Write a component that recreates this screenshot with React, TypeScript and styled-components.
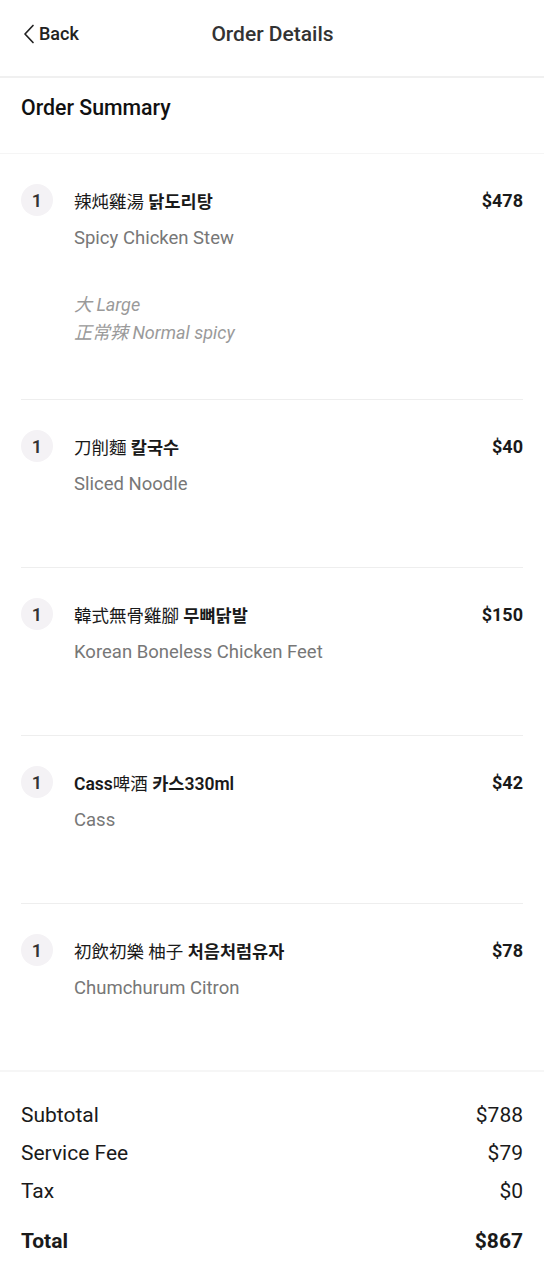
import React from "react";
import styled, { createGlobalStyle } from "styled-components";

const GlobalStyle = createGlobalStyle`
  body {
    margin: 0;
    background: #ffffff;
    font-family: Roboto, "Noto Sans CJK KR", "Noto Sans CJK SC", sans-serif;
    color: #1a1a1a;
  }
`

const Page = styled.div`
  width: 544px;
  min-height: 1280px;
  background: #fff;
`

const Header = styled.header`
  height: 78px;
  display: grid;
  grid-template-columns: 1fr auto 1fr;
  align-items: center;
  padding: 0 21px 9px 22px;
  box-sizing: border-box;
  border-bottom: 2px solid #f0f0f0;
`

const BackButton = styled.button`
  justify-self: start;
  display: flex;
  align-items: center;
  gap: 3px;
  border: none;
  background: transparent;
  padding: 0;
  font-family: Roboto, sans-serif;
  font-size: 18px;
  font-weight: 500;
  color: #222;
  cursor: pointer;
`

const Title = styled.h1`
  margin: 0;
  font-size: 21px;
  font-weight: 500;
  color: #333;
`

const SummaryHead = styled.h2`
  margin: 0;
  padding: 16px 21px 0;
  height: 76px;
  box-sizing: border-box;
  font-size: 21.3px;
  font-weight: 500;
  line-height: 28px;
  color: #111;
  border-bottom: 1px solid #f5f5f5;
`

const ItemList = styled.ul`
  list-style: none;
  margin: 0;
  padding: 0 21px;
`

const Item = styled.li`
  padding: 30px 0 52px;
  border-bottom: 1px solid #eeeeee;

  &:last-child {
    border-bottom: none;
    padding-bottom: 51px;
  }
`

const ItemRow = styled.div`
  display: flex;
  align-items: center;
  height: 32px;
`

const Qty = styled.span`
  width: 32px;
  height: 32px;
  border-radius: 50%;
  background: #f4f2f5;
  display: flex;
  align-items: center;
  justify-content: center;
  font-size: 18px;
  font-weight: 600;
  color: #333;
  margin-right: 21px;
  flex-shrink: 0;
`

const ItemName = styled.span`
  flex: 1;
  font-size: 17.5px;
  font-weight: 600;
  color: #1a1a1a;
`

const Han = styled.span`
  font-weight: 400;
`

const Price = styled.span`
  font-size: 18px;
  font-weight: 700;
  color: #1a1a1a;
`

const Detail = styled.div`
  margin: 10px 0 19px 53px;
  font-size: 18.5px;
  line-height: 24px;
  color: #777;
`

const Notes = styled.div`
  margin: 41px 0 0 53px;
  font-size: 18px;
  line-height: 28px;
  font-style: italic;
  color: #9a9a9a;
`

const Totals = styled.section`
  border-top: 2px solid #f6f6f6;
  padding: 24px 21px 0;
`

const TotalRow = styled.div<{ $strong?: boolean }>`
  display: flex;
  justify-content: space-between;
  align-items: center;
  height: 38px;
  margin-top: ${p => (p.$strong ? "12px" : "0")};
  font-size: 21px;
  font-weight: ${p => (p.$strong ? 700 : 400)};
  color: #1a1a1a;
`

interface IOrderItem {
    qty: number;
    name: string;
    detail: string;
    price: number;
    notes?: string[];
}

const items: IOrderItem[] = [
    { qty: 1, name: "辣炖雞湯 닭도리탕", detail: "Spicy Chicken Stew", price: 478, notes: ["大 Large", "正常辣 Normal spicy"] },
    { qty: 1, name: "刀削麵 칼국수", detail: "Sliced Noodle", price: 40 },
    { qty: 1, name: "韓式無骨雞腳 무뼈닭발", detail: "Korean Boneless Chicken Feet", price: 150 },
    { qty: 1, name: "Cass啤酒 카스330ml", detail: "Cass", price: 42 },
    { qty: 1, name: "初飲初樂 柚子 처음처럼유자", detail: "Chumchurum Citron", price: 78 },
]

// chinese characters render in the regular weight, the rest stays bold
const renderName = (name: string) =>
    name.split(/([\u4e00-\u9fff]+)/).map((part, i) =>
        /[\u4e00-\u9fff]/.test(part) ? <Han key={i}>{part}</Han> : <React.Fragment key={i}>{part}</React.Fragment>
    )

const ChevronLeft = () => (
    <svg width="14" height="22" viewBox="0 0 14 22" fill="none">
        <path d="M11 2.5 L3 11 L11 19.5" stroke="#222" strokeWidth="1.7" strokeLinecap="round" strokeLinejoin="round" />
    </svg>
)

const App: React.FC = () => {
    const subtotal = items.reduce((sum, it) => sum + it.price * it.qty, 0)
    const fee = 79
    const tax = 0

    return (
        <Page>
            <GlobalStyle />
            <Header>
                <BackButton>
                    <ChevronLeft />
                    Back
                </BackButton>
                <Title>Order Details</Title>
                <span />
            </Header>
            <SummaryHead>Order Summary</SummaryHead>
            <ItemList>
                {items.map((it, i) => (
                    <Item key={i}>
                        <ItemRow>
                            <Qty>{it.qty}</Qty>
                            <ItemName>{renderName(it.name)}</ItemName>
                            <Price>${it.price}</Price>
                        </ItemRow>
                        <Detail>{it.detail}</Detail>
                        {it.notes && (
                            <Notes>
                                {it.notes.map(n => <div key={n}>{n}</div>)}
                            </Notes>
                        )}
                    </Item>
                ))}
            </ItemList>
            <Totals>
                <TotalRow><span>Subtotal</span><span>${subtotal}</span></TotalRow>
                <TotalRow><span>Service Fee</span><span>${fee}</span></TotalRow>
                <TotalRow><span>Tax</span><span>${tax}</span></TotalRow>
                <TotalRow $strong><span>Total</span><span>${subtotal + fee + tax}</span></TotalRow>
            </Totals>
        </Page>
    )
}

export default App;
